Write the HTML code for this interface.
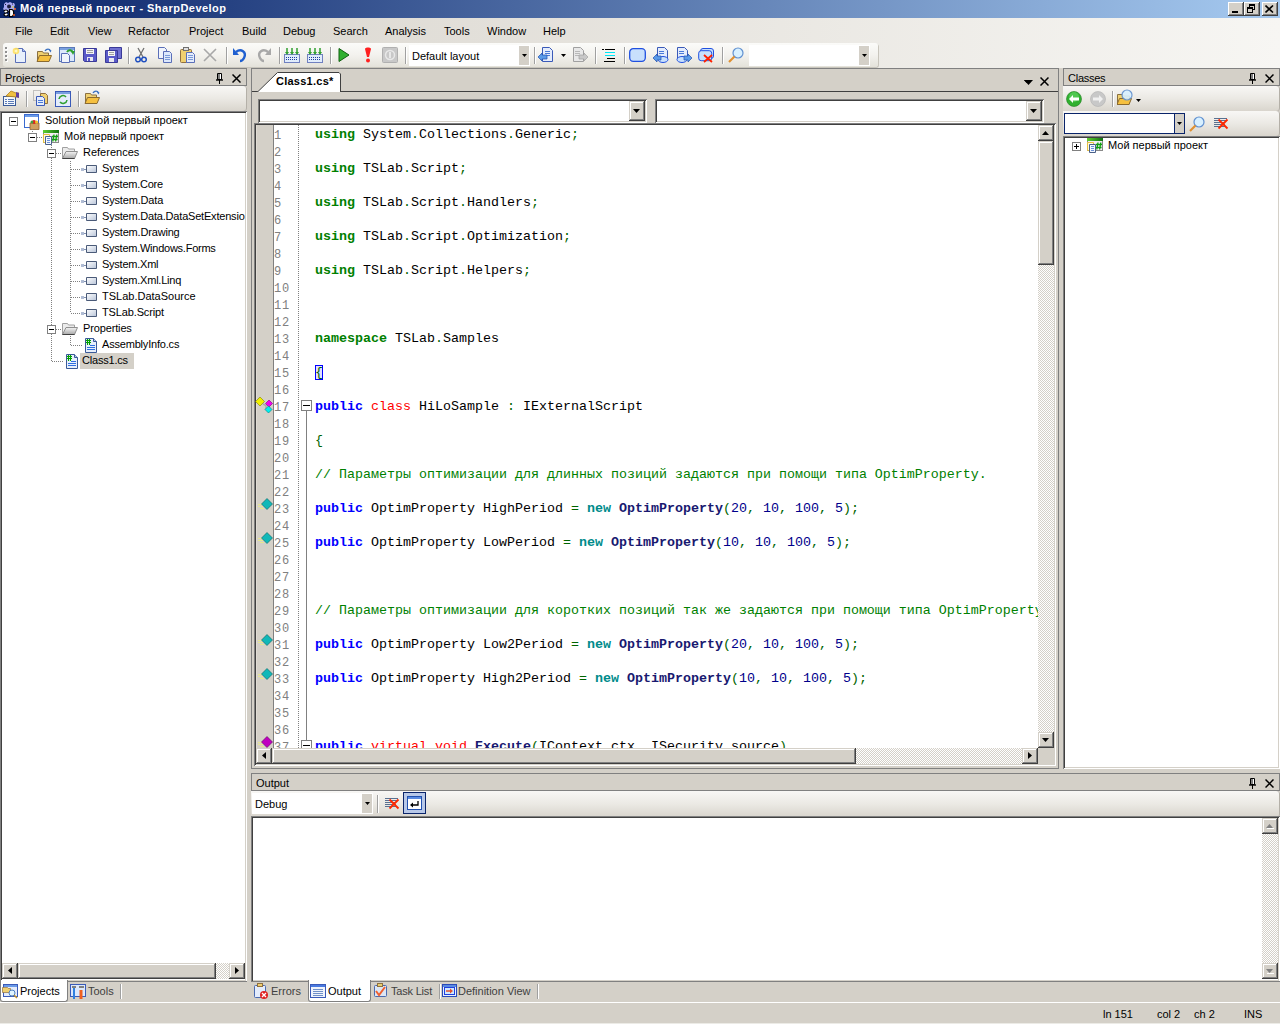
<!DOCTYPE html>
<html><head><meta charset="utf-8"><style>
*{margin:0;padding:0;box-sizing:border-box}
html,body{width:1280px;height:1024px;overflow:hidden;background:#d4d0c8;font-family:"Liberation Sans",sans-serif;font-size:11px;color:#000}
.a{position:absolute}
.t{white-space:nowrap;line-height:13px}
.raised{background:#d4d0c8;box-shadow:inset -1px -1px #404040,inset 1px 1px #d4d0c8,inset -2px -2px #808080,inset 2px 2px #fff}
.raisedT{background:#d4d0c8;box-shadow:inset -1px -1px #404040,inset 1px 1px #fff,inset -2px -2px #808080,inset 2px 2px #d4d0c8}
.sunk{box-shadow:inset 1px 1px #808080,inset -1px -1px #fff,inset 2px 2px #404040,inset -2px -2px #d4d0c8}
.chk{background:repeating-conic-gradient(#d4d0c8 0 25%,#fff 0 50%) 0 0/2px 2px}
.ptb{background:linear-gradient(to bottom,#f8f7f5 0%,#ebe9e4 50%,#d9d5cd 100%);border-radius:0 3px 3px 0;box-shadow:inset -1px 0 #b4b0a8}
.hdr{background:#d4d0c8;border:1px solid #808080}
.code{font-family:"Liberation Mono",monospace;font-size:13.333px;white-space:pre;line-height:17px}
.ln{color:#808080}
.kg{color:#008000;font-weight:bold}
.kb{color:#0000ff;font-weight:bold}
.kr{color:#ff0000}
.kt{color:#008b8b;font-weight:bold}
.mn{color:#191970;font-weight:bold}
.nm{color:#00008b}
.pu{color:#006400}
.cm{color:#008000}
</style></head><body>
<div class="a " style="left:0px;top:0px;width:1280px;height:18px;background:linear-gradient(to right,#0a246a,#a6caf0)"></div>
<svg class="a" style="left:1px;top:1px" width="18" height="16" viewBox="0 0 18 16"><path d="M3 3l2-2 2 1 2-1 2 1 2 0 1 2-1 2 1 2-2 2h-8l-2-2 1-2z" fill="#a8a8f0"/><circle cx="8" cy="5.5" r="2" fill="#202040"/><path d="M4 3.5h1M11 3h1" stroke="#202040"/><path d="M3 10.5c0-2 4-2 4 0s-4 1-4 3 4 2 4 0M8.5 8.5v7h2c3 0 3-7 0-7z" fill="#fff" stroke="#000" stroke-width="1.2"/><circle cx="14" cy="8" r="1" fill="#f06020"/><circle cx="13" cy="14" r="1" fill="#f06020"/><circle cx="12" cy="6" r="0.8" fill="#f0e000"/></svg>
<div class="a t " style="left:20px;top:2px;color:#fff;font-weight:bold;letter-spacing:0.45px">Мой первый проект - SharpDevelop</div>
<div class="a raisedT" style="left:1228px;top:2px;width:16px;height:14px;"><div class="a" style="left:4px;top:9px;width:6px;height:2px;background:#000"></div></div>
<div class="a raisedT" style="left:1244px;top:2px;width:16px;height:14px;"><div class="a" style="left:5px;top:2px;width:6px;height:6px;border:1px solid #000;border-top-width:2px"></div><div class="a" style="left:3px;top:5px;width:6px;height:6px;border:1px solid #000;border-top-width:2px;background:#d4d0c8"></div></div>
<div class="a raisedT" style="left:1262px;top:2px;width:16px;height:14px;"><svg class="a" style="left:3px;top:3px" width="9" height="8"><path d="M0.5 0.5L8 7.5M8 0.5L0.5 7.5" stroke="#000" stroke-width="1.6"/></svg></div>
<div class="a " style="left:0px;top:18px;width:1280px;height:50px;background:linear-gradient(to right,#d6d2ca,#f7f6f3)"></div>
<div class="a t " style="left:15px;top:25px;">File</div>
<div class="a t " style="left:50px;top:25px;">Edit</div>
<div class="a t " style="left:88px;top:25px;">View</div>
<div class="a t " style="left:128px;top:25px;">Refactor</div>
<div class="a t " style="left:189px;top:25px;">Project</div>
<div class="a t " style="left:242px;top:25px;">Build</div>
<div class="a t " style="left:283px;top:25px;">Debug</div>
<div class="a t " style="left:333px;top:25px;">Search</div>
<div class="a t " style="left:385px;top:25px;">Analysis</div>
<div class="a t " style="left:444px;top:25px;">Tools</div>
<div class="a t " style="left:487px;top:25px;">Window</div>
<div class="a t " style="left:543px;top:25px;">Help</div>
<div class="a " style="left:3px;top:43px;width:875px;height:24px;background:linear-gradient(to bottom,#fbfbf9,#f3f2ee 50%,#e4e2da);border-radius:3px;box-shadow:1px 1px 0 #c8c5bc"></div>
<div class="a " style="left:5px;top:47px;width:2px;height:2px;background:#909090;box-shadow:1px 1px #fff"></div>
<div class="a " style="left:5px;top:51px;width:2px;height:2px;background:#909090;box-shadow:1px 1px #fff"></div>
<div class="a " style="left:5px;top:55px;width:2px;height:2px;background:#909090;box-shadow:1px 1px #fff"></div>
<div class="a " style="left:5px;top:59px;width:2px;height:2px;background:#909090;box-shadow:1px 1px #fff"></div>
<svg class="a" style="left:12px;top:47px" width="16" height="16" viewBox="0 0 16 16"><path d="M3.5 1.5h7l3 3v11h-10z" fill="#e8f0fc" stroke="#5a6fb8"/><path d="M10.5 1.5v3h3" fill="#a8c0f0" stroke="#5a6fb8"/><circle cx="4" cy="4" r="3.3" fill="#ffe060" opacity="0.9"/><circle cx="4" cy="4" r="1.5" fill="#fff8c0"/></svg>
<svg class="a" style="left:36px;top:47px" width="16" height="16" viewBox="0 0 16 16"><path d="M1.5 4.5h5l1 1.5h5v8h-11z" fill="#f0d070" stroke="#8a7040"/><path d="M3.5 8.5h12l-2.5 6h-12z" fill="#f5c040" stroke="#8a6a30"/><path d="M9 4c1.5-2.5 4.5-2.5 5.5 0" fill="none" stroke="#3a70c0" stroke-width="1.4"/><path d="M13 3l2.5 0.5-1 2z" fill="#3a70c0"/></svg>
<svg class="a" style="left:59px;top:47px" width="16" height="16" viewBox="0 0 16 16"><rect x="0.5" y="0.5" width="15" height="14" fill="#dce8fc" stroke="#5a7ab8"/><rect x="1" y="1" width="14" height="2" fill="#7aa0e0"/><path d="M2.5 6.5h6l2 2v7h-8z" fill="#f0f4fc" stroke="#5a6fb8"/><path d="M8 5c2-3 5-2 6 1" fill="none" stroke="#30a030" stroke-width="2"/><path d="M12 4h4l-2 4z" fill="#30a030"/></svg>
<svg class="a" style="left:82px;top:47px" width="16" height="16" viewBox="0 0 16 16"><path d="M1.5 1.5h13v13h-12l-1-1z" fill="#5a5ac8" stroke="#3a3a98"/><rect x="4" y="2" width="8" height="5" fill="#f4f4f4"/><path d="M5 3.5h6M5 5.5h6" stroke="#a0a0a0"/><rect x="5" y="10" width="6" height="4" fill="#e8e8f0"/><rect x="6" y="11" width="2" height="3" fill="#5a5ac8"/></svg>
<svg class="a" style="left:105px;top:47px" width="17" height="16" viewBox="0 0 17 16"><path d="M4.5 0.5h12v11h-12z" fill="#7070d0" stroke="#3a3a98"/><path d="M0.5 3.5h12v12h-12z" fill="#5a5ac8" stroke="#3a3a98"/><rect x="3" y="4" width="7" height="5" fill="#f4f4f4"/><path d="M4 5.5h5M4 7.5h5" stroke="#a0a0a0"/><rect x="4" y="11" width="5" height="4" fill="#e8e8f0"/></svg>
<div class="a " style="left:128px;top:47px;width:2px;height:17px;background:linear-gradient(to right,#a0a0a0 50%,#fff 50%)"></div>
<svg class="a" style="left:135px;top:47px" width="12" height="16" viewBox="0 0 12 16"><path d="M3 1l5 9M9 1l-5 9" stroke="#707070" stroke-width="1.3"/><circle cx="3" cy="12.5" r="2.3" fill="none" stroke="#2050c0" stroke-width="1.5"/><circle cx="9" cy="12.5" r="2.3" fill="none" stroke="#2050c0" stroke-width="1.5"/></svg>
<svg class="a" style="left:157px;top:47px" width="16" height="16" viewBox="0 0 16 16"><path d="M1.5 0.5h6l2 2v9h-8z" fill="#f0f4fc" stroke="#5a6fb8"/><path d="M6.5 4.5h6l2 2v9h-8z" fill="#dce8fc" stroke="#5a6fb8"/><path d="M8 8.5h5M8 10.5h5M8 12.5h5" stroke="#7a9ad8"/></svg>
<svg class="a" style="left:180px;top:47px" width="16" height="16" viewBox="0 0 16 16"><rect x="0.5" y="2.5" width="11" height="13" rx="1" fill="#f0d070" stroke="#907040"/><rect x="3.5" y="0.5" width="5" height="3" fill="#e0e0e0" stroke="#707070"/><path d="M6.5 5.5h6l2 2v8h-8z" fill="#e4ecfc" stroke="#5a6fb8"/><path d="M8 8.5h5M8 10.5h5M8 12.5h5" stroke="#7a9ad8"/></svg>
<svg class="a" style="left:202px;top:47px" width="16" height="16" viewBox="0 0 16 16"><path d="M2 2l12 12M14 2L2 14" stroke="#a8a8a8" stroke-width="1.6"/></svg>
<div class="a " style="left:226px;top:47px;width:2px;height:17px;background:linear-gradient(to right,#a0a0a0 50%,#fff 50%)"></div>
<svg class="a" style="left:232px;top:47px" width="16" height="16" viewBox="0 0 16 16"><path d="M4 5c5-4 11 0 8 6-1 2-3 3-4 3" fill="none" stroke="#2060d0" stroke-width="2.4"/><path d="M1 1v7h6z" fill="#2060d0"/></svg>
<svg class="a" style="left:256px;top:47px" width="16" height="16" viewBox="0 0 16 16"><path d="M12 5c-5-4-11 0-8 6 1 2 3 3 4 3" fill="none" stroke="#a8a8a8" stroke-width="2.4"/><path d="M15 1v7h-6z" fill="#a8a8a8"/></svg>
<div class="a " style="left:279px;top:47px;width:2px;height:17px;background:linear-gradient(to right,#a0a0a0 50%,#fff 50%)"></div>
<svg class="a" style="left:284px;top:47px" width="16" height="16" viewBox="0 0 16 16"><rect x="0.5" y="7.5" width="15" height="8" fill="#e0ecfc" stroke="#7080c0"/><rect x="2" y="10" width="1" height="1" fill="#2040a0"/><rect x="4" y="10" width="1" height="1" fill="#2040a0"/><rect x="6" y="10" width="1" height="1" fill="#2040a0"/><rect x="8" y="10" width="1" height="1" fill="#2040a0"/><rect x="10" y="10" width="1" height="1" fill="#2040a0"/><rect x="12" y="10" width="1" height="1" fill="#2040a0"/><rect x="2" y="12" width="1" height="1" fill="#2040a0"/><rect x="4" y="12" width="1" height="1" fill="#2040a0"/><rect x="6" y="12" width="1" height="1" fill="#2040a0"/><rect x="8" y="12" width="1" height="1" fill="#2040a0"/><rect x="10" y="12" width="1" height="1" fill="#2040a0"/><rect x="12" y="12" width="1" height="1" fill="#2040a0"/><path d="M3 1v5M8 1v5M13 1v5" stroke="#30a030" stroke-width="1.5"/><path d="M1 5h4l-2 3zM6 5h4l-2 3zM11 5h4l-2 3z" fill="#30a030"/></svg>
<svg class="a" style="left:307px;top:47px" width="16" height="16" viewBox="0 0 16 16"><rect x="0.5" y="7.5" width="15" height="8" fill="#e0ecfc" stroke="#7080c0"/><rect x="2" y="10" width="1" height="1" fill="#2040a0"/><rect x="4" y="10" width="1" height="1" fill="#2040a0"/><rect x="6" y="10" width="1" height="1" fill="#2040a0"/><rect x="8" y="10" width="1" height="1" fill="#2040a0"/><rect x="10" y="10" width="1" height="1" fill="#2040a0"/><rect x="12" y="10" width="1" height="1" fill="#2040a0"/><rect x="2" y="12" width="1" height="1" fill="#2040a0"/><rect x="4" y="12" width="1" height="1" fill="#2040a0"/><rect x="6" y="12" width="1" height="1" fill="#2040a0"/><rect x="8" y="12" width="1" height="1" fill="#2040a0"/><rect x="10" y="12" width="1" height="1" fill="#2040a0"/><rect x="12" y="12" width="1" height="1" fill="#2040a0"/><path d="M3 1v5M8 1v5M13 1v5" stroke="#30a030" stroke-width="1.5"/><path d="M1 5h4l-2 3zM6 5h4l-2 3zM11 5h4l-2 3z" fill="#30a030"/></svg>
<div class="a " style="left:330px;top:47px;width:2px;height:17px;background:linear-gradient(to right,#a0a0a0 50%,#fff 50%)"></div>
<svg class="a" style="left:338px;top:47px" width="12" height="16" viewBox="0 0 12 16"><path d="M1 1.5l10 6.5-10 6.5z" fill="#30b030" stroke="#106010"/></svg>
<svg class="a" style="left:364px;top:47px" width="8" height="16" viewBox="0 0 8 16"><path d="M1 2c0-2 6-2 6 0l-2 8h-2z" fill="#ff2020"/><circle cx="4" cy="13.5" r="2" fill="#ff2020"/></svg>
<svg class="a" style="left:382px;top:47px" width="16" height="16" viewBox="0 0 16 16"><rect x="0.5" y="0.5" width="15" height="15" rx="1" fill="#c8c8c8" stroke="#b0b0b0"/><circle cx="8" cy="8" r="4.5" fill="none" stroke="#e8e8e8" stroke-width="1.5"/><rect x="7" y="5" width="2" height="6" fill="#e8e8e8"/></svg>
<div class="a " style="left:405px;top:47px;width:2px;height:17px;background:linear-gradient(to right,#a0a0a0 50%,#fff 50%)"></div>
<div class="a " style="left:409px;top:45px;width:121px;height:21px;background:#fff"></div>
<div class="a " style="left:519px;top:46px;width:10px;height:19px;background:#d4d0c8"></div>
<svg class="a" style="left:522px;top:54px" width="5" height="3" viewBox="0 0 5 3"><path d="M0 0h5l-2.5 3z" fill="#000"/></svg>
<div class="a t " style="left:412px;top:50px;">Default layout</div>
<div class="a " style="left:534px;top:47px;width:2px;height:17px;background:linear-gradient(to right,#a0a0a0 50%,#fff 50%)"></div>
<svg class="a" style="left:538px;top:47px" width="16" height="16" viewBox="0 0 16 16"><path d="M4.5 0.5h7l3 3v11h-10z" fill="#e4ecfc" stroke="#3a5ab8"/><path d="M7 4.5h5M7 6.5h5M7 8.5h5" stroke="#4a7ad8"/><path d="M0 10l4-4v2h5v4h-5v2z" fill="#5a9ae8" stroke="#2050b0" stroke-width="0.7"/></svg>
<svg class="a" style="left:561px;top:54px" width="5" height="3" viewBox="0 0 5 3"><path d="M0 0h5l-2.5 3z" fill="#000"/></svg>
<svg class="a" style="left:572px;top:47px" width="16" height="16" viewBox="0 0 16 16"><path d="M1.5 0.5h7l3 3v11h-10z" fill="#e8e8e8" stroke="#a0a0a0"/><path d="M3 4.5h5M3 6.5h5M3 8.5h5" stroke="#b8b8b8"/><path d="M16 10l-4-4v2h-5v4h5v2z" fill="#c8c8c8" stroke="#a0a0a0" stroke-width="0.7"/></svg>
<div class="a " style="left:595px;top:47px;width:2px;height:17px;background:linear-gradient(to right,#a0a0a0 50%,#fff 50%)"></div>
<svg class="a" style="left:601px;top:47px" width="15" height="16" viewBox="0 0 15 16"><path d="M1 2.5h2M4 2.5h10M3 14.5h11M6 11.5h8" stroke="#000" stroke-width="1"/><path d="M4 5.5h10M4 8.5h10" stroke="#00e8f8" stroke-width="1"/></svg>
<div class="a " style="left:624px;top:47px;width:2px;height:17px;background:linear-gradient(to right,#a0a0a0 50%,#fff 50%)"></div>
<svg class="a" style="left:629px;top:47px" width="17" height="16" viewBox="0 0 17 16"><rect x="0.7" y="1.7" width="15.6" height="12.6" rx="3.5" fill="#c8e0fc" stroke="#2050e0" stroke-width="1.3"/></svg>
<svg class="a" style="left:653px;top:47px" width="16" height="16" viewBox="0 0 16 16"><path d="M4.5 0.5h7l3 3v8h-10z" fill="#e4ecfc" stroke="#3a5ab8"/><path d="M6 4.5h5M6 6.5h5" stroke="#4a7ad8"/><ellipse cx="10" cy="12.5" rx="5" ry="3" fill="#c8e0fc" stroke="#2050e0"/><path d="M0 11l4-4v2h4v4h-4v2z" fill="#5a9ae8" stroke="#2050b0" stroke-width="0.7"/></svg>
<svg class="a" style="left:676px;top:47px" width="16" height="16" viewBox="0 0 16 16"><path d="M1.5 0.5h7l3 3v8h-10z" fill="#e4ecfc" stroke="#3a5ab8"/><path d="M3 4.5h5M3 6.5h5" stroke="#4a7ad8"/><ellipse cx="6" cy="12.5" rx="5" ry="3" fill="#c8e0fc" stroke="#2050e0"/><path d="M16 11l-4-4v2h-4v4h4v2z" fill="#5a9ae8" stroke="#2050b0" stroke-width="0.7"/></svg>
<svg class="a" style="left:698px;top:47px" width="17" height="16" viewBox="0 0 17 16"><rect x="2.5" y="1.5" width="13" height="10" rx="2.5" fill="#c8e0fc" stroke="#2050e0"/><rect x="0.7" y="3.7" width="13" height="10" rx="2.5" fill="#c8e0fc" stroke="#2050e0"/><path d="M6 8l8 7M14 8l-8 7" stroke="#ff2000" stroke-width="1.8"/></svg>
<div class="a " style="left:722px;top:47px;width:2px;height:17px;background:linear-gradient(to right,#a0a0a0 50%,#fff 50%)"></div>
<svg class="a" style="left:728px;top:47px" width="16" height="16" viewBox="0 0 16 16"><circle cx="10" cy="6" r="5" fill="#d8f0ff" stroke="#6090d0" stroke-width="1.2"/><path d="M6.5 9.5L1 15" stroke="#e09030" stroke-width="2.2"/></svg>
<div class="a " style="left:749px;top:45px;width:121px;height:21px;background:#fff"></div>
<div class="a " style="left:859px;top:46px;width:10px;height:19px;background:#d4d0c8"></div>
<svg class="a" style="left:862px;top:54px" width="5" height="3" viewBox="0 0 5 3"><path d="M0 0h5l-2.5 3z" fill="#000"/></svg>
<div class="a hdr" style="left:0px;top:68px;width:247px;height:18px;"></div>
<div class="a t " style="left:5px;top:72px;letter-spacing:0px">Projects</div>
<svg class="a" style="left:216px;top:73px" width="7" height="11" viewBox="0 0 7 11"><path d="M1.5 0.5h4v6h-4z" fill="#fff" stroke="#000"/><path d="M3 1v5" stroke="#000"/><path d="M0 7h7" stroke="#000" stroke-width="1.4"/><path d="M3.5 7v4" stroke="#000"/></svg>
<svg class="a" style="left:232px;top:74px" width="9" height="9" viewBox="0 0 9 9"><path d="M0.5 0.5L8.5 8.5M8.5 0.5L0.5 8.5" stroke="#000" stroke-width="1.5"/></svg>
<div class="a ptb" style="left:0px;top:86px;width:247px;height:25px;"></div>
<svg class="a" style="left:3px;top:90px" width="16" height="16" viewBox="0 0 16 16"><rect x="0.5" y="6.5" width="12" height="9" fill="#f4f8fc" stroke="#3a5a98"/><path d="M2 9.5h2M5 9.5h6M2 11.5h2M5 11.5h6M2 13.5h2M5 13.5h6" stroke="#5a7ab8"/><path d="M3 6l5-5 5 2 3 0v4h-3z" fill="#f0c040" stroke="#b08020" stroke-width="0.8"/><path d="M13 2l3 1v5l-3-1z" fill="#6040a0"/></svg>
<div class="a " style="left:26px;top:91px;width:2px;height:16px;background:linear-gradient(to right,#a0a0a0 50%,#fff 50%)"></div>
<svg class="a" style="left:33px;top:90px" width="16" height="16" viewBox="0 0 16 16"><path d="M0.5 0.5h7v10h-7z" fill="none" stroke="#909090" stroke-dasharray="1 1"/><path d="M7.5 3.5h5l2 2v8h-7z" fill="#f0d070" stroke="#907040"/><path d="M3.5 6.5h6l2 2v7h-8z" fill="#e4ecfc" stroke="#3a5ab8"/><path d="M5 10.5h5M5 12.5h5" stroke="#4a7ad8"/></svg>
<svg class="a" style="left:55px;top:91px" width="16" height="16" viewBox="0 0 16 16"><rect x="0.5" y="0.5" width="15" height="15" fill="#e4ecfc" stroke="#3a5ab8"/><rect x="1" y="1" width="14" height="2" fill="#7aa0e0"/><path d="M4 8a4 4 0 0 1 7-2M12 9a4 4 0 0 1-7 2" fill="none" stroke="#30a030" stroke-width="1.6"/></svg>
<div class="a " style="left:78px;top:91px;width:2px;height:16px;background:linear-gradient(to right,#a0a0a0 50%,#fff 50%)"></div>
<svg class="a" style="left:84px;top:89px" width="16" height="16" viewBox="0 0 16 16"><path d="M1.5 4.5h5l1 1.5h5v8h-11z" fill="#f0d070" stroke="#8a7040"/><path d="M3.5 8.5h12l-2.5 6h-12z" fill="#f5c040" stroke="#8a6a30"/><path d="M9 4c1.5-2.5 4.5-2.5 5.5 0" fill="none" stroke="#3a70c0" stroke-width="1.4"/><path d="M13 3l2.5 0.5-1 2z" fill="#3a70c0"/></svg>
<div class="a sunk" style="left:0px;top:111px;width:247px;height:871px;background:#fff"></div>
<div class="a chk" style="left:2px;top:963px;width:243px;height:16px;"></div>
<div class="a raised" style="left:2px;top:963px;width:16px;height:16px;"></div>
<svg class="a" style="left:8px;top:967px" width="4" height="7" viewBox="0 0 4 7"><path d="M4 0v7L0 3.5z" fill="#000"/></svg>
<div class="a raised" style="left:229px;top:963px;width:16px;height:16px;"></div>
<svg class="a" style="left:235px;top:967px" width="4" height="7" viewBox="0 0 4 7"><path d="M0 0v7L4 3.5z" fill="#000"/></svg>
<div class="a raised" style="left:18px;top:963px;width:198px;height:16px;"></div>
<svg class="a" style="left:9px;top:117px" width="9" height="9" viewBox="0 0 9 9"><rect x="0.5" y="0.5" width="8" height="8" fill="#fff" stroke="#808080"/><path d="M2 4.5h5" stroke="#000"/></svg>
<svg class="a" style="left:24px;top:114px" width="16" height="16" viewBox="0 0 16 16"><rect x="0.5" y="0.5" width="14" height="13" fill="#fff" stroke="#3a6ad0"/><rect x="1" y="1" width="13" height="2" fill="#6a9ae8"/><path d="M6 9h9v6.5h-9z" fill="#d0a060" stroke="#906030" stroke-width="0.8"/><circle cx="10" cy="8" r="2" fill="#e02020"/><circle cx="8" cy="8" r="1.5" fill="#40a040"/><circle cx="12.5" cy="8" r="1.5" fill="#f0c020"/></svg>
<div class="a t " style="left:45px;top:114px;">Solution Мой первый проект</div>
<div class="a " style="left:32px;top:129px;width:1px;height:4px;background:repeating-linear-gradient(to bottom,#808080 0 1px,transparent 1px 2px)"></div>
<svg class="a" style="left:28px;top:133px" width="9" height="9" viewBox="0 0 9 9"><rect x="0.5" y="0.5" width="8" height="8" fill="#fff" stroke="#808080"/><path d="M2 4.5h5" stroke="#000"/></svg>
<div class="a " style="left:37px;top:137px;width:5px;height:1px;background:repeating-linear-gradient(to right,#808080 0 1px,transparent 1px 2px)"></div>
<svg class="a" style="left:43px;top:130px" width="16" height="16" viewBox="0 0 16 16"><defs><linearGradient id="gg" x1="0" x2="1"><stop offset="0" stop-color="#60d030"/><stop offset="1" stop-color="#107010"/></linearGradient></defs><rect x="0.5" y="0.5" width="15" height="12" fill="#f4eef4" stroke="#8a8a8a"/><rect x="0" y="0" width="16" height="3" fill="url(#gg)"/><path d="M11 4.5l-1.2 7M13.8 4.5l-1.2 7M9 6.5h6M8.6 9.5h6" stroke="#10a010" stroke-width="1.3"/><path d="M0.5 4.5h6v8h-6z" fill="#fffbe0" stroke="#e8c040"/><path d="M2.5 6.5h6v8h-6z" fill="#f4f8ff" stroke="#4a6088"/><path d="M4 8.5h3M4 10.5h3M4 12.5h3" stroke="#6a90d8"/></svg>
<div class="a t " style="left:64px;top:130px;">Мой первый проект</div>
<div class="a " style="left:51px;top:145px;width:1px;height:4px;background:repeating-linear-gradient(to bottom,#808080 0 1px,transparent 1px 2px)"></div>
<svg class="a" style="left:47px;top:149px" width="9" height="9" viewBox="0 0 9 9"><rect x="0.5" y="0.5" width="8" height="8" fill="#fff" stroke="#808080"/><path d="M2 4.5h5" stroke="#000"/></svg>
<div class="a " style="left:56px;top:153px;width:5px;height:1px;background:repeating-linear-gradient(to right,#808080 0 1px,transparent 1px 2px)"></div>
<svg class="a" style="left:62px;top:145px" width="16" height="16" viewBox="0 0 16 16"><defs><linearGradient id="fg" x1="0" y1="0" x2="0" y2="1"><stop offset="0" stop-color="#f4f4f4"/><stop offset="1" stop-color="#a8a8a8"/></linearGradient></defs><path d="M0.5 13.5v-11h5l1 1.5h6v9.5z" fill="#ececec" stroke="#a0a0a0"/><path d="M4 6.5h11.5l-3 7h-12z" fill="url(#fg)" stroke="#909090"/><path d="M0.5 13.5h12" stroke="#404040"/></svg>
<div class="a t " style="left:83px;top:146px;">References</div>
<div class="a " style="left:70px;top:161px;width:1px;height:152px;background:repeating-linear-gradient(to bottom,#808080 0 1px,transparent 1px 2px)"></div>
<div class="a " style="left:71px;top:169px;width:10px;height:1px;background:repeating-linear-gradient(to right,#808080 0 1px,transparent 1px 2px)"></div>
<svg class="a" style="left:80px;top:161px" width="17" height="16" viewBox="0 0 17 16"><defs><linearGradient id="rg" x1="0" y1="0" x2="1" y2="1"><stop offset="0" stop-color="#ffffff"/><stop offset="1" stop-color="#b8c4d8"/></linearGradient></defs><path d="M4 8.5h2" stroke="#8090b0"/><rect x="1" y="7" width="3" height="3" fill="#b0bcd4"/><path d="M6.5 4.5h10v7h-10z" fill="url(#rg)" stroke="#4a5a78"/></svg>
<div class="a t " style="left:102px;top:162px;width:143px;overflow:hidden;letter-spacing:0px">System</div>
<div class="a " style="left:71px;top:185px;width:10px;height:1px;background:repeating-linear-gradient(to right,#808080 0 1px,transparent 1px 2px)"></div>
<svg class="a" style="left:80px;top:177px" width="17" height="16" viewBox="0 0 17 16"><defs><linearGradient id="rg" x1="0" y1="0" x2="1" y2="1"><stop offset="0" stop-color="#ffffff"/><stop offset="1" stop-color="#b8c4d8"/></linearGradient></defs><path d="M4 8.5h2" stroke="#8090b0"/><rect x="1" y="7" width="3" height="3" fill="#b0bcd4"/><path d="M6.5 4.5h10v7h-10z" fill="url(#rg)" stroke="#4a5a78"/></svg>
<div class="a t " style="left:102px;top:178px;width:143px;overflow:hidden;letter-spacing:-0.25px">System.Core</div>
<div class="a " style="left:71px;top:201px;width:10px;height:1px;background:repeating-linear-gradient(to right,#808080 0 1px,transparent 1px 2px)"></div>
<svg class="a" style="left:80px;top:193px" width="17" height="16" viewBox="0 0 17 16"><defs><linearGradient id="rg" x1="0" y1="0" x2="1" y2="1"><stop offset="0" stop-color="#ffffff"/><stop offset="1" stop-color="#b8c4d8"/></linearGradient></defs><path d="M4 8.5h2" stroke="#8090b0"/><rect x="1" y="7" width="3" height="3" fill="#b0bcd4"/><path d="M6.5 4.5h10v7h-10z" fill="url(#rg)" stroke="#4a5a78"/></svg>
<div class="a t " style="left:102px;top:194px;width:143px;overflow:hidden;letter-spacing:-0.17px">System.Data</div>
<div class="a " style="left:71px;top:217px;width:10px;height:1px;background:repeating-linear-gradient(to right,#808080 0 1px,transparent 1px 2px)"></div>
<svg class="a" style="left:80px;top:209px" width="17" height="16" viewBox="0 0 17 16"><defs><linearGradient id="rg" x1="0" y1="0" x2="1" y2="1"><stop offset="0" stop-color="#ffffff"/><stop offset="1" stop-color="#b8c4d8"/></linearGradient></defs><path d="M4 8.5h2" stroke="#8090b0"/><rect x="1" y="7" width="3" height="3" fill="#b0bcd4"/><path d="M6.5 4.5h10v7h-10z" fill="url(#rg)" stroke="#4a5a78"/></svg>
<div class="a t " style="left:102px;top:210px;width:143px;overflow:hidden;letter-spacing:-0.2px">System.Data.DataSetExtensio</div>
<div class="a " style="left:71px;top:233px;width:10px;height:1px;background:repeating-linear-gradient(to right,#808080 0 1px,transparent 1px 2px)"></div>
<svg class="a" style="left:80px;top:225px" width="17" height="16" viewBox="0 0 17 16"><defs><linearGradient id="rg" x1="0" y1="0" x2="1" y2="1"><stop offset="0" stop-color="#ffffff"/><stop offset="1" stop-color="#b8c4d8"/></linearGradient></defs><path d="M4 8.5h2" stroke="#8090b0"/><rect x="1" y="7" width="3" height="3" fill="#b0bcd4"/><path d="M6.5 4.5h10v7h-10z" fill="url(#rg)" stroke="#4a5a78"/></svg>
<div class="a t " style="left:102px;top:226px;width:143px;overflow:hidden;letter-spacing:-0.18px">System.Drawing</div>
<div class="a " style="left:71px;top:249px;width:10px;height:1px;background:repeating-linear-gradient(to right,#808080 0 1px,transparent 1px 2px)"></div>
<svg class="a" style="left:80px;top:241px" width="17" height="16" viewBox="0 0 17 16"><defs><linearGradient id="rg" x1="0" y1="0" x2="1" y2="1"><stop offset="0" stop-color="#ffffff"/><stop offset="1" stop-color="#b8c4d8"/></linearGradient></defs><path d="M4 8.5h2" stroke="#8090b0"/><rect x="1" y="7" width="3" height="3" fill="#b0bcd4"/><path d="M6.5 4.5h10v7h-10z" fill="url(#rg)" stroke="#4a5a78"/></svg>
<div class="a t " style="left:102px;top:242px;width:143px;overflow:hidden;letter-spacing:-0.25px">System.Windows.Forms</div>
<div class="a " style="left:71px;top:265px;width:10px;height:1px;background:repeating-linear-gradient(to right,#808080 0 1px,transparent 1px 2px)"></div>
<svg class="a" style="left:80px;top:257px" width="17" height="16" viewBox="0 0 17 16"><defs><linearGradient id="rg" x1="0" y1="0" x2="1" y2="1"><stop offset="0" stop-color="#ffffff"/><stop offset="1" stop-color="#b8c4d8"/></linearGradient></defs><path d="M4 8.5h2" stroke="#8090b0"/><rect x="1" y="7" width="3" height="3" fill="#b0bcd4"/><path d="M6.5 4.5h10v7h-10z" fill="url(#rg)" stroke="#4a5a78"/></svg>
<div class="a t " style="left:102px;top:258px;width:143px;overflow:hidden;letter-spacing:-0.24px">System.Xml</div>
<div class="a " style="left:71px;top:281px;width:10px;height:1px;background:repeating-linear-gradient(to right,#808080 0 1px,transparent 1px 2px)"></div>
<svg class="a" style="left:80px;top:273px" width="17" height="16" viewBox="0 0 17 16"><defs><linearGradient id="rg" x1="0" y1="0" x2="1" y2="1"><stop offset="0" stop-color="#ffffff"/><stop offset="1" stop-color="#b8c4d8"/></linearGradient></defs><path d="M4 8.5h2" stroke="#8090b0"/><rect x="1" y="7" width="3" height="3" fill="#b0bcd4"/><path d="M6.5 4.5h10v7h-10z" fill="url(#rg)" stroke="#4a5a78"/></svg>
<div class="a t " style="left:102px;top:274px;width:143px;overflow:hidden;letter-spacing:-0.23px">System.Xml.Linq</div>
<div class="a " style="left:71px;top:297px;width:10px;height:1px;background:repeating-linear-gradient(to right,#808080 0 1px,transparent 1px 2px)"></div>
<svg class="a" style="left:80px;top:289px" width="17" height="16" viewBox="0 0 17 16"><defs><linearGradient id="rg" x1="0" y1="0" x2="1" y2="1"><stop offset="0" stop-color="#ffffff"/><stop offset="1" stop-color="#b8c4d8"/></linearGradient></defs><path d="M4 8.5h2" stroke="#8090b0"/><rect x="1" y="7" width="3" height="3" fill="#b0bcd4"/><path d="M6.5 4.5h10v7h-10z" fill="url(#rg)" stroke="#4a5a78"/></svg>
<div class="a t " style="left:102px;top:290px;width:143px;overflow:hidden;letter-spacing:0px">TSLab.DataSource</div>
<div class="a " style="left:71px;top:313px;width:10px;height:1px;background:repeating-linear-gradient(to right,#808080 0 1px,transparent 1px 2px)"></div>
<svg class="a" style="left:80px;top:305px" width="17" height="16" viewBox="0 0 17 16"><defs><linearGradient id="rg" x1="0" y1="0" x2="1" y2="1"><stop offset="0" stop-color="#ffffff"/><stop offset="1" stop-color="#b8c4d8"/></linearGradient></defs><path d="M4 8.5h2" stroke="#8090b0"/><rect x="1" y="7" width="3" height="3" fill="#b0bcd4"/><path d="M6.5 4.5h10v7h-10z" fill="url(#rg)" stroke="#4a5a78"/></svg>
<div class="a t " style="left:102px;top:306px;width:143px;overflow:hidden;letter-spacing:-0.14px">TSLab.Script</div>
<div class="a " style="left:51px;top:158px;width:1px;height:203px;background:repeating-linear-gradient(to bottom,#808080 0 1px,transparent 1px 2px)"></div>
<div class="a " style="left:56px;top:329px;width:5px;height:1px;background:repeating-linear-gradient(to right,#808080 0 1px,transparent 1px 2px)"></div>
<svg class="a" style="left:47px;top:325px" width="9" height="9" viewBox="0 0 9 9"><rect x="0.5" y="0.5" width="8" height="8" fill="#fff" stroke="#808080"/><path d="M2 4.5h5" stroke="#000"/></svg>
<svg class="a" style="left:62px;top:321px" width="16" height="16" viewBox="0 0 16 16"><defs><linearGradient id="fg" x1="0" y1="0" x2="0" y2="1"><stop offset="0" stop-color="#f4f4f4"/><stop offset="1" stop-color="#a8a8a8"/></linearGradient></defs><path d="M0.5 13.5v-11h5l1 1.5h6v9.5z" fill="#ececec" stroke="#a0a0a0"/><path d="M4 6.5h11.5l-3 7h-12z" fill="url(#fg)" stroke="#909090"/><path d="M0.5 13.5h12" stroke="#404040"/></svg>
<div class="a t " style="left:83px;top:322px;letter-spacing:-0.14px">Properties</div>
<div class="a " style="left:70px;top:336px;width:1px;height:9px;background:repeating-linear-gradient(to bottom,#808080 0 1px,transparent 1px 2px)"></div>
<div class="a " style="left:71px;top:345px;width:12px;height:1px;background:repeating-linear-gradient(to right,#808080 0 1px,transparent 1px 2px)"></div>
<svg class="a" style="left:84px;top:337px" width="14" height="16" viewBox="0 0 14 16"><path d="M1.5 1.5h8l3 3v11h-11z" fill="#e8f0fc" stroke="#3a5a98"/><path d="M9.5 1.5v3h3" fill="#b8c8e8" stroke="#3a5a98"/><path d="M6 8.5h5M3 10.5h8M3 12.5h8" stroke="#3070e0"/><path d="M3.5 2v6M5.5 2v6M2 3.5h5M2 5.5h5" stroke="#00a000" stroke-width="1.1"/></svg>
<div class="a t " style="left:102px;top:338px;letter-spacing:-0.19px">AssemblyInfo.cs</div>
<div class="a " style="left:52px;top:361px;width:12px;height:1px;background:repeating-linear-gradient(to right,#808080 0 1px,transparent 1px 2px)"></div>
<svg class="a" style="left:65px;top:353px" width="14" height="16" viewBox="0 0 14 16"><path d="M1.5 1.5h8l3 3v11h-11z" fill="#e8f0fc" stroke="#3a5a98"/><path d="M9.5 1.5v3h3" fill="#b8c8e8" stroke="#3a5a98"/><path d="M6 8.5h5M3 10.5h8M3 12.5h8" stroke="#3070e0"/><path d="M3.5 2v6M5.5 2v6M2 3.5h5M2 5.5h5" stroke="#00a000" stroke-width="1.1"/></svg>
<div class="a " style="left:80px;top:353px;width:54px;height:16px;background:#d4d0c8"></div>
<div class="a t " style="left:82px;top:354px;letter-spacing:-0.2px">Class1.cs</div>
<div class="a " style="left:251px;top:68px;width:808px;height:701px;border:1px solid #808080;border-right-color:#808080"></div>
<div class="a " style="left:252px;top:91px;width:6px;height:1px;background:#404040"></div>
<div class="a " style="left:341px;top:91px;width:717px;height:1px;background:#404040"></div>
<svg class="a" style="left:257px;top:71px" width="85" height="21" viewBox="0 0 85 21"><path d="M0.5 21L20.5 1.5H82l1.5 1.5V21" fill="#fff" stroke="#404040"/></svg>
<div class="a t " style="left:276px;top:75px;font-weight:bold;letter-spacing:0.25px">Class1.cs*</div>
<svg class="a" style="left:1024px;top:80px" width="5" height="3" viewBox="0 0 5 3"><path d="M0 0h5l-2.5 3z" fill="#000"/></svg>
<svg class="a" style="left:1024px;top:80px" width="9" height="5" viewBox="0 0 9 5"><path d="M0 0h9L4.5 5z" fill="#000"/></svg>
<svg class="a" style="left:1040px;top:77px" width="9" height="9" viewBox="0 0 9 9"><path d="M0.5 0.5L8.5 8.5M8.5 0.5L0.5 8.5" stroke="#000" stroke-width="1.5"/></svg>
<div class="a sunk" style="left:258px;top:99px;width:389px;height:24px;background:#fff"></div>
<div class="a raised" style="left:629px;top:101px;width:16px;height:20px;"></div>
<svg class="a" style="left:633px;top:109px" width="7" height="4" viewBox="0 0 7 4"><path d="M0 0h7L3.5 4z" fill="#000"/></svg>
<div class="a sunk" style="left:655px;top:99px;width:389px;height:24px;background:#fff"></div>
<div class="a raised" style="left:1026px;top:101px;width:16px;height:20px;"></div>
<svg class="a" style="left:1030px;top:109px" width="7" height="4" viewBox="0 0 7 4"><path d="M0 0h7L3.5 4z" fill="#000"/></svg>
<div class="a sunk" style="left:254px;top:123px;width:802px;height:643px;background:#fff"></div>
<div class="a " style="left:256px;top:125px;width:17px;height:623px;background:#d4d0c8;border-left:1px solid #e0dcd5"></div>
<div class="a " style="left:273px;top:125px;width:1px;height:623px;background:#808080"></div>
<div class="a " style="left:298px;top:125px;width:1px;height:623px;background:repeating-linear-gradient(to bottom,#808080 0 1px,transparent 1px 2px)"></div>
<div class="a chk" style="left:1038px;top:125px;width:16px;height:623px;"></div>
<div class="a raised" style="left:1038px;top:125px;width:16px;height:16px;"></div>
<svg class="a" style="left:1042px;top:131px" width="8" height="5" viewBox="0 0 8 5"><path d="M0 4h7L3.5 0z" fill="#000"/></svg>
<div class="a raised" style="left:1038px;top:732px;width:16px;height:16px;"></div>
<svg class="a" style="left:1042px;top:738px" width="8" height="5" viewBox="0 0 8 5"><path d="M0 0h7L3.5 4z" fill="#000"/></svg>
<div class="a raised" style="left:1038px;top:141px;width:16px;height:124px;"></div>
<div class="a chk" style="left:256px;top:748px;width:782px;height:16px;"></div>
<div class="a raised" style="left:256px;top:748px;width:16px;height:16px;"></div>
<svg class="a" style="left:262px;top:752px" width="4" height="7" viewBox="0 0 4 7"><path d="M4 0v7L0 3.5z" fill="#000"/></svg>
<div class="a raised" style="left:1022px;top:748px;width:16px;height:16px;"></div>
<svg class="a" style="left:1028px;top:752px" width="4" height="7" viewBox="0 0 4 7"><path d="M0 0v7L4 3.5z" fill="#000"/></svg>
<div class="a raised" style="left:272px;top:748px;width:584px;height:16px;"></div>
<div class="a " style="left:1038px;top:748px;width:17px;height:17px;background:#d4d0c8"></div>
<div class="a" style="left:274px;top:125px;width:764px;height:623px;overflow:hidden">
<div class="a code ln" style="left:0px;top:3px;font-size:12px;letter-spacing:0.8px">1</div>
<div class="a code" style="left:41px;top:1px"><span class="kg">using</span> System<span class="pu">.</span>Collections<span class="pu">.</span>Generic<span class="pu">;</span></div>
<div class="a code ln" style="left:0px;top:20px;font-size:12px;letter-spacing:0.8px">2</div>
<div class="a code ln" style="left:0px;top:37px;font-size:12px;letter-spacing:0.8px">3</div>
<div class="a code" style="left:41px;top:35px"><span class="kg">using</span> TSLab<span class="pu">.</span>Script<span class="pu">;</span></div>
<div class="a code ln" style="left:0px;top:54px;font-size:12px;letter-spacing:0.8px">4</div>
<div class="a code ln" style="left:0px;top:71px;font-size:12px;letter-spacing:0.8px">5</div>
<div class="a code" style="left:41px;top:69px"><span class="kg">using</span> TSLab<span class="pu">.</span>Script<span class="pu">.</span>Handlers<span class="pu">;</span></div>
<div class="a code ln" style="left:0px;top:88px;font-size:12px;letter-spacing:0.8px">6</div>
<div class="a code ln" style="left:0px;top:105px;font-size:12px;letter-spacing:0.8px">7</div>
<div class="a code" style="left:41px;top:103px"><span class="kg">using</span> TSLab<span class="pu">.</span>Script<span class="pu">.</span>Optimization<span class="pu">;</span></div>
<div class="a code ln" style="left:0px;top:122px;font-size:12px;letter-spacing:0.8px">8</div>
<div class="a code ln" style="left:0px;top:139px;font-size:12px;letter-spacing:0.8px">9</div>
<div class="a code" style="left:41px;top:137px"><span class="kg">using</span> TSLab<span class="pu">.</span>Script<span class="pu">.</span>Helpers<span class="pu">;</span></div>
<div class="a code ln" style="left:0px;top:156px;font-size:12px;letter-spacing:0.8px">10</div>
<div class="a code ln" style="left:0px;top:173px;font-size:12px;letter-spacing:0.8px">11</div>
<div class="a code ln" style="left:0px;top:190px;font-size:12px;letter-spacing:0.8px">12</div>
<div class="a code ln" style="left:0px;top:207px;font-size:12px;letter-spacing:0.8px">13</div>
<div class="a code" style="left:41px;top:205px"><span class="kg">namespace</span> TSLab<span class="pu">.</span>Samples</div>
<div class="a code ln" style="left:0px;top:224px;font-size:12px;letter-spacing:0.8px">14</div>
<div class="a code ln" style="left:0px;top:241px;font-size:12px;letter-spacing:0.8px">15</div>
<div class="a code" style="left:41px;top:239px"><span class="pu" style="outline:1px solid #0000ff;outline-offset:-1px;background:#e0e0ff">{</span></div>
<div class="a code ln" style="left:0px;top:258px;font-size:12px;letter-spacing:0.8px">16</div>
<div class="a code ln" style="left:0px;top:275px;font-size:12px;letter-spacing:0.8px">17</div>
<div class="a code" style="left:41px;top:273px"><span class="kb">public</span> <span class="kr">class</span> HiLoSample <span class="pu">:</span> IExternalScript</div>
<div class="a code ln" style="left:0px;top:292px;font-size:12px;letter-spacing:0.8px">18</div>
<div class="a code ln" style="left:0px;top:309px;font-size:12px;letter-spacing:0.8px">19</div>
<div class="a code" style="left:41px;top:307px"><span class="pu">{</span></div>
<div class="a code ln" style="left:0px;top:326px;font-size:12px;letter-spacing:0.8px">20</div>
<div class="a code ln" style="left:0px;top:343px;font-size:12px;letter-spacing:0.8px">21</div>
<div class="a code" style="left:41px;top:341px"><span class="cm">// Параметры оптимизации для длинных позиций задаются при помощи типа OptimProperty.</span></div>
<div class="a code ln" style="left:0px;top:360px;font-size:12px;letter-spacing:0.8px">22</div>
<div class="a code ln" style="left:0px;top:377px;font-size:12px;letter-spacing:0.8px">23</div>
<div class="a code" style="left:41px;top:375px"><span class="kb">public</span> OptimProperty HighPeriod <span class="pu">=</span> <span class="kt">new</span> <span class="mn">OptimProperty</span><span class="pu">(</span><span class="nm">20</span><span class="pu">, </span><span class="nm">10</span><span class="pu">, </span><span class="nm">100</span><span class="pu">, </span><span class="nm">5</span><span class="pu">);</span></div>
<div class="a code ln" style="left:0px;top:394px;font-size:12px;letter-spacing:0.8px">24</div>
<div class="a code ln" style="left:0px;top:411px;font-size:12px;letter-spacing:0.8px">25</div>
<div class="a code" style="left:41px;top:409px"><span class="kb">public</span> OptimProperty LowPeriod <span class="pu">=</span> <span class="kt">new</span> <span class="mn">OptimProperty</span><span class="pu">(</span><span class="nm">10</span><span class="pu">, </span><span class="nm">10</span><span class="pu">, </span><span class="nm">100</span><span class="pu">, </span><span class="nm">5</span><span class="pu">);</span></div>
<div class="a code ln" style="left:0px;top:428px;font-size:12px;letter-spacing:0.8px">26</div>
<div class="a code ln" style="left:0px;top:445px;font-size:12px;letter-spacing:0.8px">27</div>
<div class="a code ln" style="left:0px;top:462px;font-size:12px;letter-spacing:0.8px">28</div>
<div class="a code ln" style="left:0px;top:479px;font-size:12px;letter-spacing:0.8px">29</div>
<div class="a code" style="left:41px;top:477px"><span class="cm">// Параметры оптимизации для коротких позиций так же задаются при помощи типа OptimProperty.</span></div>
<div class="a code ln" style="left:0px;top:496px;font-size:12px;letter-spacing:0.8px">30</div>
<div class="a code ln" style="left:0px;top:513px;font-size:12px;letter-spacing:0.8px">31</div>
<div class="a code" style="left:41px;top:511px"><span class="kb">public</span> OptimProperty Low2Period <span class="pu">=</span> <span class="kt">new</span> <span class="mn">OptimProperty</span><span class="pu">(</span><span class="nm">20</span><span class="pu">, </span><span class="nm">10</span><span class="pu">, </span><span class="nm">100</span><span class="pu">, </span><span class="nm">5</span><span class="pu">);</span></div>
<div class="a code ln" style="left:0px;top:530px;font-size:12px;letter-spacing:0.8px">32</div>
<div class="a code ln" style="left:0px;top:547px;font-size:12px;letter-spacing:0.8px">33</div>
<div class="a code" style="left:41px;top:545px"><span class="kb">public</span> OptimProperty High2Period <span class="pu">=</span> <span class="kt">new</span> <span class="mn">OptimProperty</span><span class="pu">(</span><span class="nm">10</span><span class="pu">, </span><span class="nm">10</span><span class="pu">, </span><span class="nm">100</span><span class="pu">, </span><span class="nm">5</span><span class="pu">);</span></div>
<div class="a code ln" style="left:0px;top:564px;font-size:12px;letter-spacing:0.8px">34</div>
<div class="a code ln" style="left:0px;top:581px;font-size:12px;letter-spacing:0.8px">35</div>
<div class="a code ln" style="left:0px;top:598px;font-size:12px;letter-spacing:0.8px">36</div>
<div class="a code ln" style="left:0px;top:615px;font-size:12px;letter-spacing:0.8px">37</div>
<div class="a code" style="left:41px;top:613px"><span class="kb">public</span> <span class="kr">virtual</span> <span class="kr">void</span> <span class="mn">Execute</span><span class="pu">(</span>IContext ctx<span class="pu">,</span> ISecurity source<span class="pu">)</span></div>
</div>
<svg class="a" style="left:301px;top:400px" width="11" height="11" viewBox="0 0 11 11"><rect x="0.5" y="0.5" width="10" height="10" fill="#fff" stroke="#808080"/><path d="M2 5.5h7" stroke="#000"/></svg>
<div class="a " style="left:306px;top:411px;width:1px;height:329px;background:#808080"></div>
<svg class="a" style="left:301px;top:740px" width="11" height="8" viewBox="0 0 11 8"><rect x="0.5" y="0.5" width="10" height="10" fill="#fff" stroke="#808080"/><path d="M2 5.5h7" stroke="#000"/></svg>
<svg class="a" style="left:258px;top:498px" width="15" height="13" viewBox="0 0 15 13"><path d="M0 6.5h4M0 8.5h5M2 10.5h4" stroke="#e8e890" stroke-width="1"/><path d="M9 0.5l5.5 5.5-5.5 5.5-5.5-5.5z" fill="#10b8b8" stroke="#006060" stroke-width="0.6"/></svg>
<svg class="a" style="left:258px;top:532px" width="15" height="13" viewBox="0 0 15 13"><path d="M0 6.5h4M0 8.5h5M2 10.5h4" stroke="#e8e890" stroke-width="1"/><path d="M9 0.5l5.5 5.5-5.5 5.5-5.5-5.5z" fill="#10b8b8" stroke="#006060" stroke-width="0.6"/></svg>
<svg class="a" style="left:258px;top:634px" width="15" height="13" viewBox="0 0 15 13"><path d="M0 6.5h4M0 8.5h5M2 10.5h4" stroke="#e8e890" stroke-width="1"/><path d="M9 0.5l5.5 5.5-5.5 5.5-5.5-5.5z" fill="#10b8b8" stroke="#006060" stroke-width="0.6"/></svg>
<svg class="a" style="left:258px;top:668px" width="15" height="13" viewBox="0 0 15 13"><path d="M0 6.5h4M0 8.5h5M2 10.5h4" stroke="#e8e890" stroke-width="1"/><path d="M9 0.5l5.5 5.5-5.5 5.5-5.5-5.5z" fill="#10b8b8" stroke="#006060" stroke-width="0.6"/></svg>
<svg class="a" style="left:258px;top:736px" width="15" height="12" viewBox="0 0 15 12"><path d="M0 6.5h4M0 8.5h5M2 10.5h4" stroke="#e8e890" stroke-width="1"/><path d="M9 0.5l5.5 5.5-5.5 5.5-5.5-5.5z" fill="#c000c0" stroke="#600060" stroke-width="0.6"/></svg>
<svg class="a" style="left:255px;top:395px" width="18" height="20" viewBox="0 0 18 20"><path d="M8 9L11 10.5V15" fill="none" stroke="#a8a8a8" stroke-width="1.5"/><path d="M5 2l4.5 4.5-4.5 4.5-4.5-4.5z" fill="#f0f000" stroke="#808000" stroke-width="0.6"/><path d="M14 5l3.5 3.5-3.5 3.5-3.5-3.5z" fill="#f000f0" stroke="#800080" stroke-width="0.6"/><path d="M13.5 11l3.5 3.5-3.5 3.5-3.5-3.5z" fill="#00f0f0" stroke="#008080" stroke-width="0.6"/></svg>
<div class="a hdr" style="left:1063px;top:68px;width:217px;height:18px;"></div>
<div class="a t " style="left:1068px;top:72px;letter-spacing:-0.25px">Classes</div>
<svg class="a" style="left:1249px;top:73px" width="7" height="11" viewBox="0 0 7 11"><path d="M1.5 0.5h4v6h-4z" fill="#fff" stroke="#000"/><path d="M3 1v5" stroke="#000"/><path d="M0 7h7" stroke="#000" stroke-width="1.4"/><path d="M3.5 7v4" stroke="#000"/></svg>
<svg class="a" style="left:1265px;top:74px" width="9" height="9" viewBox="0 0 9 9"><path d="M0.5 0.5L8.5 8.5M8.5 0.5L0.5 8.5" stroke="#000" stroke-width="1.5"/></svg>
<div class="a ptb" style="left:1063px;top:86px;width:217px;height:25px;"></div>
<div class="a ptb" style="left:1063px;top:111px;width:217px;height:25px;"></div>
<svg class="a" style="left:1066px;top:91px" width="16" height="16" viewBox="0 0 16 16"><circle cx="8" cy="8" r="7.5" fill="#30b030" stroke="#208020" stroke-width="0.6"/><circle cx="8" cy="6" r="5" fill="#70e070" opacity="0.5"/><path d="M3 8l4-4v2.5h6v3h-6v2.5z" fill="#fff"/></svg>
<svg class="a" style="left:1090px;top:91px" width="16" height="16" viewBox="0 0 16 16"><circle cx="8" cy="8" r="7.5" fill="#c8c8c8" stroke="#b0b0b0" stroke-width="0.6"/><path d="M13 8l-4-4v2.5h-6v3h6v2.5z" fill="#f0f0f0"/></svg>
<div class="a " style="left:1112px;top:91px;width:2px;height:16px;background:linear-gradient(to right,#a0a0a0 50%,#fff 50%)"></div>
<svg class="a" style="left:1117px;top:89px" width="18" height="18" viewBox="0 0 18 18"><path d="M0.5 5.5h5l1 1.5h6v8h-12z" fill="#f0d070" stroke="#8a7040"/><path d="M2.5 9.5h12l-2.5 6h-12z" fill="#f5c040" stroke="#8a6a30"/><circle cx="10" cy="6" r="5" fill="#d8f0ff" stroke="#6090d0" stroke-width="1.2" opacity="0.9"/></svg>
<svg class="a" style="left:1136px;top:99px" width="5" height="3" viewBox="0 0 5 3"><path d="M0 0h5l-2.5 3z" fill="#000"/></svg>
<div class="a " style="left:1064px;top:113px;width:121px;height:21px;background:#fff;border:1px solid #0a246a"></div>
<div class="a " style="left:1174px;top:114px;width:10px;height:19px;background:#d4d0c8;border-left:1px solid #0a246a"></div>
<svg class="a" style="left:1177px;top:122px" width="5" height="3" viewBox="0 0 5 3"><path d="M0 0h5l-2.5 3z" fill="#000"/></svg>
<svg class="a" style="left:1189px;top:116px" width="16" height="16" viewBox="0 0 16 16"><circle cx="10" cy="6" r="5" fill="#d8f0ff" stroke="#6090d0" stroke-width="1.2"/><path d="M6.5 9.5L1 15" stroke="#e09030" stroke-width="2.2"/></svg>
<svg class="a" style="left:1213px;top:115px" width="16" height="16" viewBox="0 0 16 16"><path d="M1 3.5h13M1 5.5h12M1 7.5h11M1 9.5h11M1 11.5h11" stroke="#5a7090" stroke-width="1"/><path d="M5.5 4.5l9 9M14.5 4.5l-9 9" stroke="#ff2800" stroke-width="1.8"/></svg>
<div class="a sunk" style="left:1063px;top:136px;width:217px;height:633px;background:#fff"></div>
<svg class="a" style="left:1072px;top:142px" width="9" height="9" viewBox="0 0 9 9"><rect x="0.5" y="0.5" width="8" height="8" fill="#fff" stroke="#808080"/><path d="M2 4.5h5" stroke="#000"/><path d="M4.5 2v5" stroke="#000"/></svg>
<svg class="a" style="left:1087px;top:138px" width="16" height="16" viewBox="0 0 16 16"><defs><linearGradient id="gg" x1="0" x2="1"><stop offset="0" stop-color="#60d030"/><stop offset="1" stop-color="#107010"/></linearGradient></defs><rect x="0.5" y="0.5" width="15" height="12" fill="#f4eef4" stroke="#8a8a8a"/><rect x="0" y="0" width="16" height="3" fill="url(#gg)"/><path d="M11 4.5l-1.2 7M13.8 4.5l-1.2 7M9 6.5h6M8.6 9.5h6" stroke="#10a010" stroke-width="1.3"/><path d="M0.5 4.5h6v8h-6z" fill="#fffbe0" stroke="#e8c040"/><path d="M2.5 6.5h6v8h-6z" fill="#f4f8ff" stroke="#4a6088"/><path d="M4 8.5h3M4 10.5h3M4 12.5h3" stroke="#6a90d8"/></svg>
<div class="a t " style="left:1108px;top:139px;">Мой первый проект</div>
<div class="a hdr" style="left:251px;top:773px;width:1029px;height:18px;"></div>
<div class="a t " style="left:256px;top:777px;letter-spacing:0px">Output</div>
<svg class="a" style="left:1249px;top:778px" width="7" height="11" viewBox="0 0 7 11"><path d="M1.5 0.5h4v6h-4z" fill="#fff" stroke="#000"/><path d="M3 1v5" stroke="#000"/><path d="M0 7h7" stroke="#000" stroke-width="1.4"/><path d="M3.5 7v4" stroke="#000"/></svg>
<svg class="a" style="left:1265px;top:779px" width="9" height="9" viewBox="0 0 9 9"><path d="M0.5 0.5L8.5 8.5M8.5 0.5L0.5 8.5" stroke="#000" stroke-width="1.5"/></svg>
<div class="a ptb" style="left:251px;top:791px;width:1029px;height:26px;"></div>
<div class="a " style="left:252px;top:793px;width:121px;height:21px;background:#fff"></div>
<div class="a " style="left:362px;top:794px;width:10px;height:19px;background:#d4d0c8"></div>
<svg class="a" style="left:365px;top:802px" width="5" height="3" viewBox="0 0 5 3"><path d="M0 0h5l-2.5 3z" fill="#000"/></svg>
<div class="a t " style="left:255px;top:798px;">Debug</div>
<div class="a " style="left:377px;top:795px;width:2px;height:18px;background:linear-gradient(to right,#a0a0a0 50%,#fff 50%)"></div>
<svg class="a" style="left:384px;top:795px" width="16" height="16" viewBox="0 0 16 16"><path d="M1 3.5h13M1 5.5h12M1 7.5h11M1 9.5h11M1 11.5h11" stroke="#5a7090" stroke-width="1"/><path d="M5.5 4.5l9 9M14.5 4.5l-9 9" stroke="#ff2800" stroke-width="1.8"/></svg>
<div class="a " style="left:403px;top:792px;width:23px;height:22px;background:#b8c8e8;border:1px solid #0a246a"></div>
<svg class="a" style="left:406px;top:795px" width="17" height="16" viewBox="0 0 17 16"><rect x="1.5" y="1.5" width="14" height="13" fill="#fff" stroke="#2050b0"/><rect x="2" y="2" width="13" height="2" fill="#5a8ae0"/><path d="M12 6v4H5" fill="none" stroke="#000" stroke-width="1.3"/><path d="M4 10l3-2.5v5z" fill="#000"/></svg>
<div class="a sunk" style="left:251px;top:816px;width:1029px;height:166px;background:#fff"></div>
<div class="a chk" style="left:1262px;top:818px;width:16px;height:161px;"></div>
<div class="a raised" style="left:1262px;top:818px;width:16px;height:16px;"></div>
<svg class="a" style="left:1266px;top:824px" width="8" height="5" viewBox="0 0 8 5"><path d="M1 4.5h7" stroke="#fff"/><path d="M0 4h7L3.5 0z" fill="#808080"/></svg>
<div class="a raised" style="left:1262px;top:963px;width:16px;height:16px;"></div>
<svg class="a" style="left:1266px;top:969px" width="8" height="5" viewBox="0 0 8 5"><path d="M1 4.5h7" stroke="#fff"/><path d="M0 0h7L3.5 4z" fill="#808080"/></svg>
<div class="a " style="left:0px;top:981px;width:247px;height:1px;background:#808080"></div>
<div class="a " style="left:251px;top:981px;width:1029px;height:1px;background:#808080"></div>
<div class="a " style="left:0px;top:980px;width:68px;height:22px;background:#fff;border:1px solid #808080;border-top:none;border-radius:0 0 3px 3px"></div>
<svg class="a" style="left:2px;top:983px" width="16" height="16" viewBox="0 0 16 16"><rect x="1.5" y="1.5" width="14" height="12" fill="#e4ecfc" stroke="#3a5ab8"/><rect x="2" y="2" width="13" height="2" fill="#6a9ae8"/><path d="M0.5 4.5h5l1 1h2v4h-8z" fill="#f0d070" stroke="#907040" stroke-width="0.7"/><circle cx="10" cy="10" r="3" fill="#e0f4ff" stroke="#5080c0"/><path d="M12 12l3 3" stroke="#c09030" stroke-width="1.5"/></svg>
<div class="a t " style="left:20px;top:985px;color:#000;letter-spacing:0px">Projects</div>
<svg class="a" style="left:70px;top:983px" width="16" height="16" viewBox="0 0 16 16"><rect x="0.5" y="1.5" width="15" height="12" fill="#dce8fc" stroke="#3a5ab8"/><path d="M4 3v13" stroke="#3080e0" stroke-width="2"/><path d="M11 7v9" stroke="#f06020" stroke-width="3"/><path d="M2 4h4M9 4h5" stroke="#808080" stroke-width="2"/></svg>
<div class="a t " style="left:88px;top:985px;color:#404040;letter-spacing:0px">Tools</div>
<div class="a " style="left:120px;top:984px;width:2px;height:15px;background:linear-gradient(to right,#a0a0a0 50%,#fff 50%)"></div>
<svg class="a" style="left:253px;top:983px" width="16" height="16" viewBox="0 0 16 16"><rect x="1.5" y="2.5" width="11" height="12" rx="1" fill="#e4ecfc" stroke="#4a6ab0"/><rect x="4.5" y="0.5" width="5" height="3" fill="#f0d070" stroke="#907040"/><circle cx="11" cy="12" r="4" fill="#e02020"/><path d="M9 10l4 4M13 10l-4 4" stroke="#fff" stroke-width="1.3"/></svg>
<div class="a t " style="left:271px;top:985px;color:#404040;letter-spacing:0px">Errors</div>
<div class="a " style="left:308px;top:980px;width:63px;height:22px;background:#fff;border:1px solid #808080;border-top:none;border-radius:0 0 3px 3px"></div>
<svg class="a" style="left:310px;top:983px" width="16" height="16" viewBox="0 0 16 16"><rect x="0.5" y="1.5" width="15" height="13" fill="#f0f4fc" stroke="#3a5ab8"/><rect x="1" y="2" width="14" height="2" fill="#4a7ae0"/><path d="M3 6.5h10M3 8.5h10M3 10.5h10M3 12.5h10" stroke="#7090c8"/></svg>
<div class="a t " style="left:328px;top:985px;color:#000;letter-spacing:0px">Output</div>
<svg class="a" style="left:373px;top:983px" width="16" height="16" viewBox="0 0 16 16"><rect x="1.5" y="2.5" width="12" height="11" rx="1" fill="#dce6f4" stroke="#4a6ab0"/><rect x="4.5" y="0.5" width="5" height="3" fill="#e8d070" stroke="#907040"/><path d="M3 8l3 4 6-8" fill="none" stroke="#f06030" stroke-width="2"/></svg>
<div class="a t " style="left:391px;top:985px;color:#404040;letter-spacing:-0.2px">Task List</div>
<div class="a " style="left:439px;top:984px;width:2px;height:15px;background:linear-gradient(to right,#a0a0a0 50%,#fff 50%)"></div>
<svg class="a" style="left:442px;top:983px" width="16" height="16" viewBox="0 0 16 16"><rect x="0.5" y="1.5" width="14" height="12" fill="#e8f0fc" stroke="#2a4ab8"/><rect x="1" y="2" width="13" height="2" fill="#5a8ae0"/><rect x="2.5" y="4.5" width="10" height="7" fill="#d0e8ff" stroke="#2040e0"/><path d="M4 8h5" stroke="#e05030" stroke-width="1.5"/><path d="M8 5.5l3 2.5-3 2.5z" fill="#e05030"/></svg>
<div class="a t " style="left:458px;top:985px;color:#404040;letter-spacing:0px">Definition View</div>
<div class="a " style="left:537px;top:984px;width:2px;height:15px;background:linear-gradient(to right,#a0a0a0 50%,#fff 50%)"></div>
<div class="a " style="left:0px;top:1002px;width:1280px;height:1px;background:#fff"></div>
<div class="a " style="left:0px;top:1023px;width:1280px;height:1px;background:#ecebe6"></div>
<div class="a t " style="left:1103px;top:1008px;">ln 151</div>
<div class="a t " style="left:1157px;top:1008px;">col 2</div>
<div class="a t " style="left:1194px;top:1008px;">ch 2</div>
<div class="a t " style="left:1244px;top:1008px;">INS</div>
</body></html>
